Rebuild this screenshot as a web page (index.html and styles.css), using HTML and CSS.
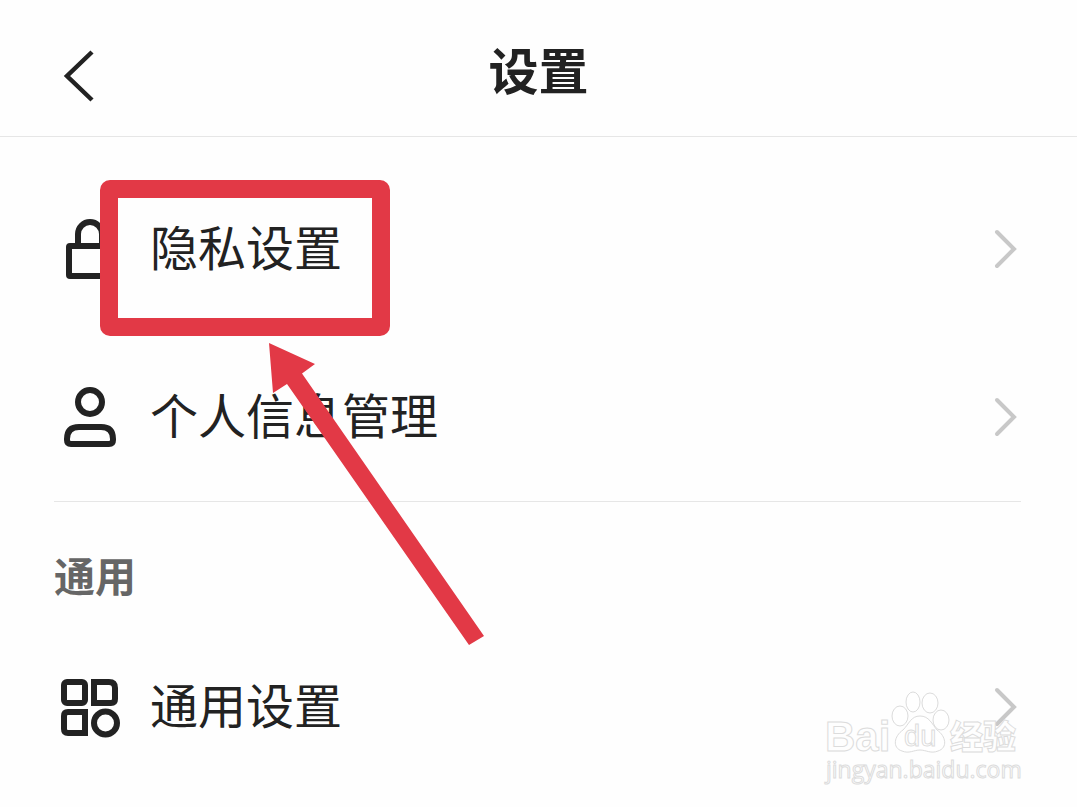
FILE: index.html
```html
<!DOCTYPE html>
<html lang="zh-CN">
<head>
<meta charset="utf-8">
<meta name="viewport" content="width=device-width, initial-scale=1">
<title>设置</title>
<link rel="stylesheet" href="styles.css">
</head>
<body>
<div class="screen">
  <header class="topbar">
    <button class="back" type="button" aria-label="返回">
      <svg width="32" height="52" viewBox="0 0 32 52" aria-hidden="true"><path d="M30 2 5 26l25 24" fill="none" stroke="currentColor" stroke-width="4.500"/></svg>
    </button>
    <h1 class="title">设置</h1>
  </header>
  <main class="settings">
    <div class="group">
      <button class="row" type="button">
        <svg class="icon" viewBox="0 0 64 64" aria-hidden="true"><g fill="none" stroke="currentColor" stroke-width="6"><rect x="11" y="29" width="42" height="30" rx="1"/><path d="M20 29V17a12 12 0 0 1 24 0v12"/></g></svg>
        <span class="label">隐私设置</span>
        <svg class="chevron" viewBox="0 0 24 40" aria-hidden="true"><path d="M3 3l17 17L3 37"/></svg>
      </button>
      <button class="row" type="button">
        <svg class="icon" viewBox="0 0 64 64" aria-hidden="true"><g fill="none" stroke="currentColor" stroke-width="6"><circle cx="32" cy="17" r="12"/><path d="M21 42H43Q55 42 55 54V55Q55 59 51 59H13Q9 59 9 55V54Q9 42 21 42Z"/></g></svg>
        <span class="label">个人信息管理</span>
        <svg class="chevron" viewBox="0 0 24 40" aria-hidden="true"><path d="M3 3l17 17L3 37"/></svg>
      </button>
    </div>
    <h2 class="section">通用</h2>
    <button class="row" type="button">
      <svg class="icon" viewBox="0 0 64 64" aria-hidden="true"><g fill="none" stroke="currentColor" stroke-width="6"><rect x="6" y="7" width="21" height="21" rx="3"/><path d="M36 7H51Q57 7 57 13V24Q57 28 53 28H36Z"/><path d="M10 37H27V58H10Q6 58 6 54V41Q6 37 10 37Z"/><circle cx="47.500" cy="48" r="11.500"/></g></svg>
      <span class="label">通用设置</span>
      <svg class="chevron" viewBox="0 0 24 40" aria-hidden="true"><path d="M3 3l17 17L3 37"/></svg>
    </button>
  </main>
  <svg class="markup" width="400" height="480" viewBox="0 0 400 480" aria-hidden="true">
    <rect x="9" y="9" width="272" height="138" rx="1" fill="none" stroke="#e23946" stroke-width="18" stroke-linejoin="round"/>
    <path d="M169 163 215 184 202 193.500 384 456 369 465 187 204 173 213Z" fill="#e23946"/>
  </svg>
  <svg class="watermark" width="204" height="100" viewBox="0 0 204 100" role="img" aria-label="Baidu 经验">
    <g class="outline">
      <text class="wm-latin" x="5" y="63">Bai</text>
      <ellipse cx="80" cy="28" rx="8" ry="10"/>
      <ellipse cx="93" cy="14" rx="7" ry="10"/>
      <ellipse cx="110" cy="15" rx="8" ry="10"/>
      <ellipse cx="121" cy="32" rx="8" ry="10"/>
      <path d="M100 28C109 28 112 36 117 42C126 48 128 60 118 63C111 66 106 62 100 62C94 62 89 66 82 63C72 60 74 48 83 42C89 36 91 28 100 28Z"/>
      <text class="wm-du" x="84" y="58">du</text>
      <text class="wm-cjk" x="130" y="61">经验</text>
      <text class="wm-url" x="6" y="90">jingyan.baidu.com</text>
    </g>
  </svg>
</div>
</body>
</html>
```
FILE: styles.css
```css
* { box-sizing: border-box; }

body {
  margin: 0;
  background: #fefefe;
  color: #222;
  font-family: "Noto Sans CJK SC", sans-serif;
}

button {
  border: 0;
  padding: 0;
  background: none;
  color: inherit;
  font: inherit;
  text-align: left;
  cursor: pointer;
}

.screen {
  position: relative;
  min-height: 100vh;
  overflow: hidden;
}

.topbar {
  display: grid;
  grid-template-columns: 1fr auto 1fr;
  align-items: center;
  padding: 28px 60px;
  border-bottom: 1px solid #e6e6e6;
}

.back {
  display: flex;
  justify-self: start;
  padding: 16px 2px 0;
}

.title {
  margin: 0;
  font-size: 50px;
  line-height: 80px;
  font-weight: 700;
}

.settings { padding: 28px 56px 12px 54px; }

.group { border-bottom: 1px solid #e6e6e6; }

.row {
  display: flex;
  align-items: center;
  gap: 28px;
  width: 100%;
  height: 168px;
  padding: 0 3px 0 4px;
}

.icon {
  flex: none;
  width: 64px;
  height: 64px;
}

.label {
  flex: 1;
  font-size: 48px;
  line-height: 72px;
  padding-bottom: 8px;
}

.chevron {
  flex: none;
  width: 24px;
  height: 40px;
  fill: none;
  stroke: #c8c8c8;
  stroke-width: 4;
  stroke-linecap: round;
}

.section {
  margin: 0;
  padding: 42px 0 19px;
  color: #666;
  font-size: 41px;
  line-height: 60px;
  font-weight: 700;
}

.markup,
.watermark {
  position: absolute;
  pointer-events: none;
}

.markup {
  top: 180px;
  left: 100px;
}

.watermark {
  top: 688px;
  right: 53px;
}

.outline {
  fill: #fff;
  fill-opacity: 0.5;
  stroke: #dcdcdc;
  stroke-width: 1;
}

.wm-latin {
  font: 700 42px "Liberation Sans", sans-serif;
}

.wm-du {
  font: 400 29px "Liberation Sans", sans-serif;
}

.wm-cjk {
  font: 900 33px "Noto Sans CJK SC", sans-serif;
}

.wm-url {
  font: 400 23px "Open Sans", sans-serif;
}
```
